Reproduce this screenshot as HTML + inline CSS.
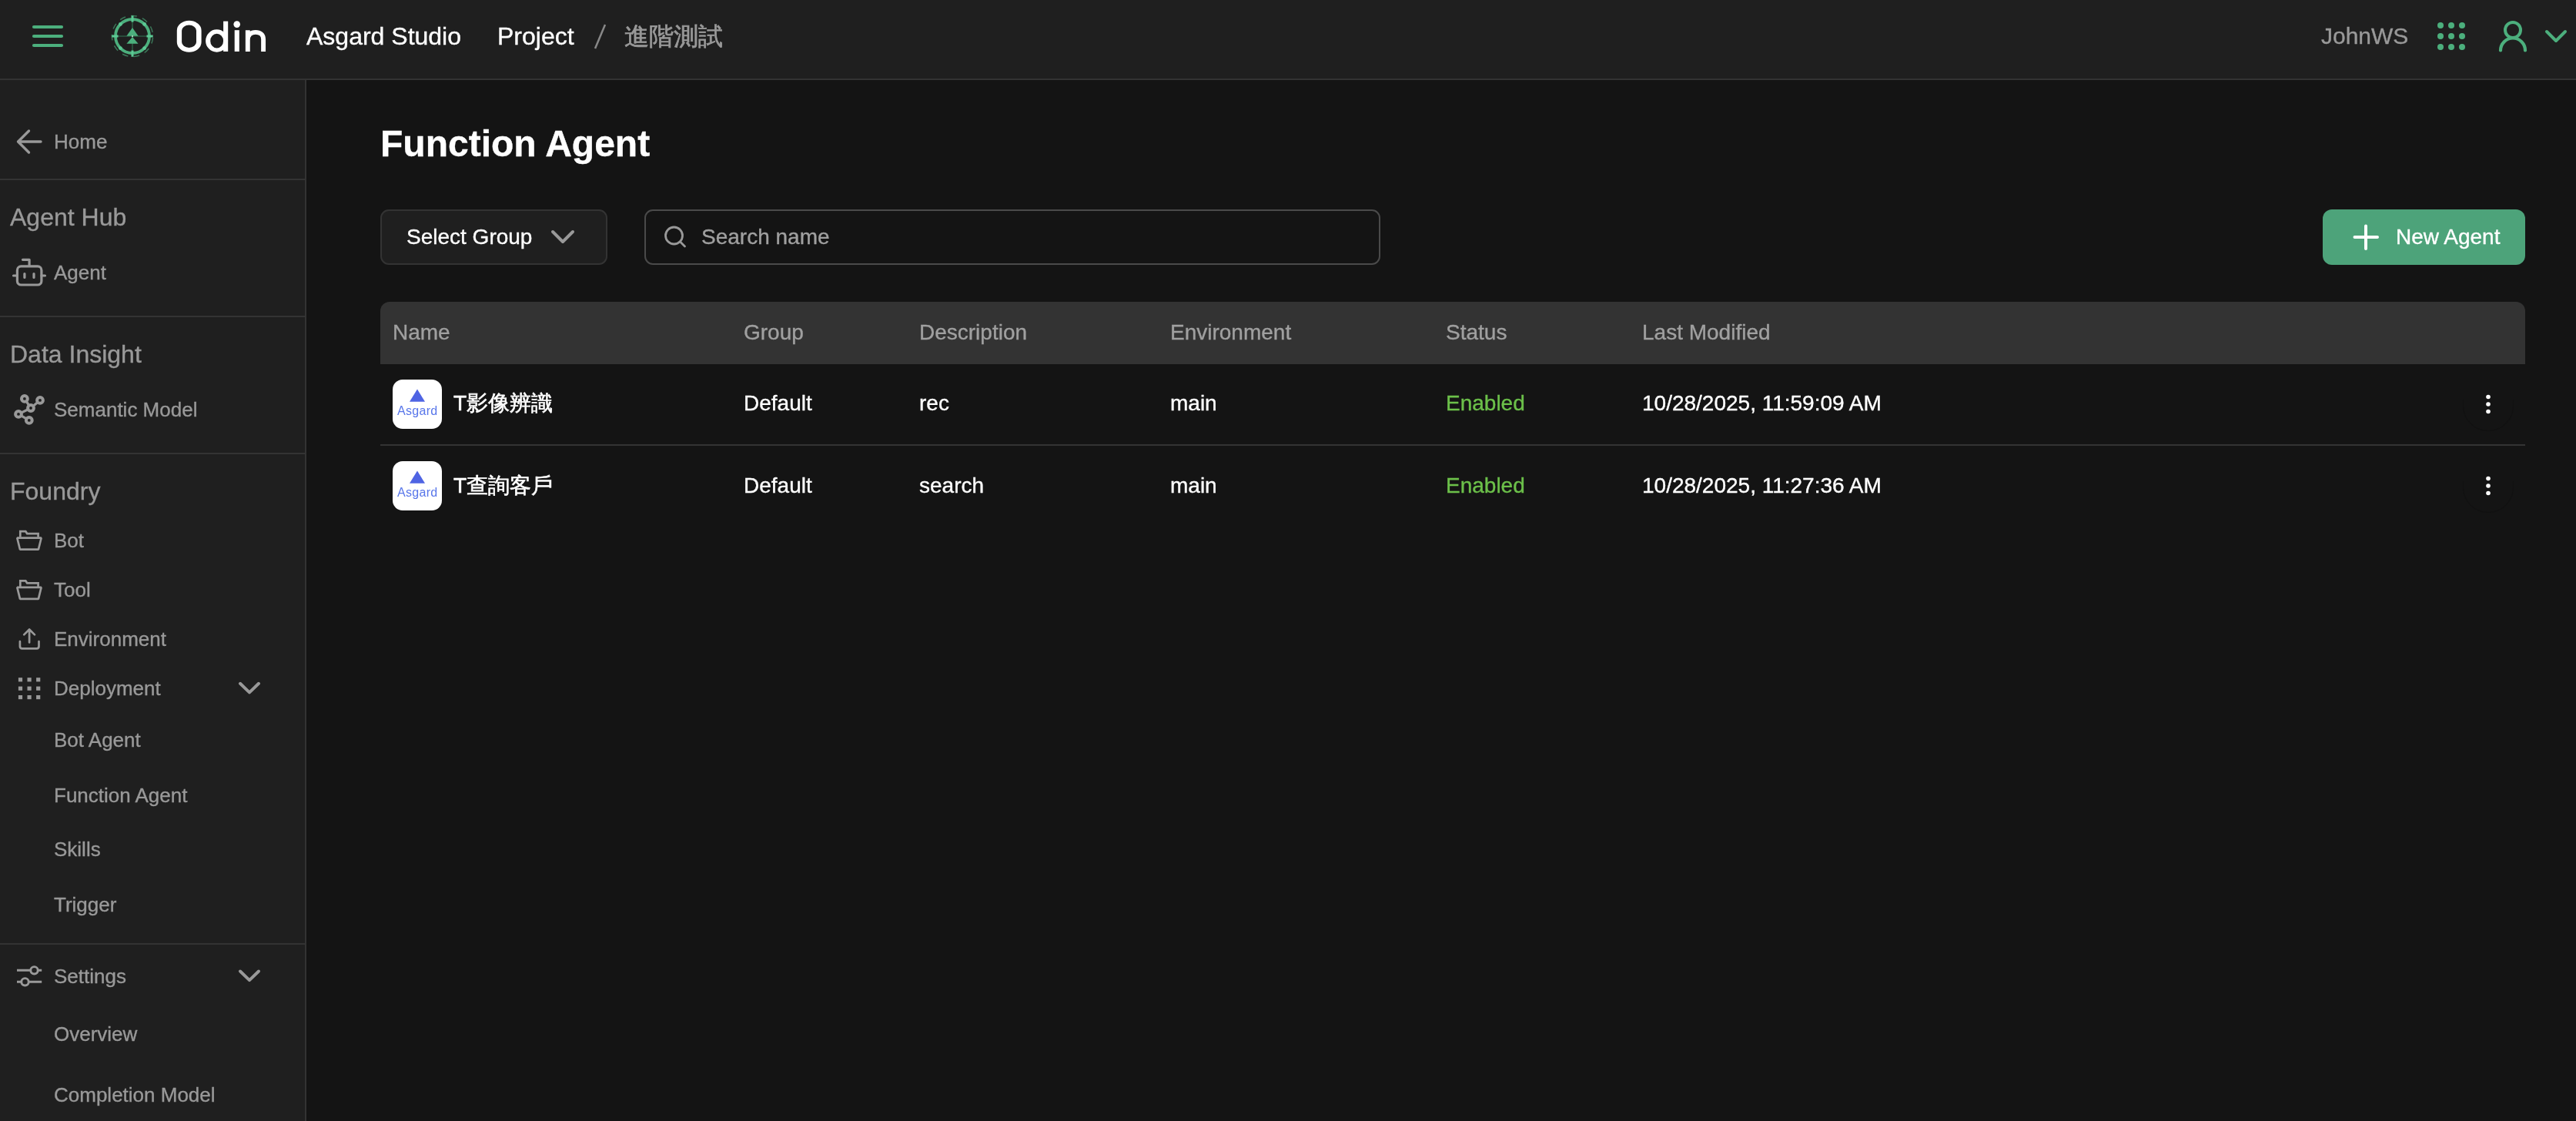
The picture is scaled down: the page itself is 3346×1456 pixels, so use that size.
<!DOCTYPE html>
<html><head><meta charset="utf-8">
<style>
*{box-sizing:border-box;margin:0;padding:0}
html,body{width:3346px;height:1456px;overflow:hidden;background:#141414;font-family:"Liberation Sans",sans-serif;}
.a{position:absolute;white-space:nowrap;line-height:40px;will-change:transform;-webkit-text-stroke:0.35px currentColor}
.bx{position:absolute}
svg{position:absolute;overflow:visible}
</style></head><body>
<div class="bx" style="left:0;top:0;width:3346px;height:102px;background:#1f1f1f"></div>
<div class="bx" style="left:0;top:102px;width:3346px;height:2px;background:#333"></div>
<div class="bx" style="left:0;top:104px;width:396px;height:1352px;background:#1f1f1f"></div>
<div class="bx" style="left:396px;top:104px;width:2px;height:1352px;background:#333"></div>
<svg style="left:0;top:0" width="100" height="100"><g stroke="#4caf7d" stroke-width="4.2" stroke-linecap="round"><line x1="44" y1="35" x2="80" y2="35"/><line x1="44" y1="47" x2="80" y2="47"/><line x1="44" y1="59" x2="80" y2="59"/></g></svg>
<svg style="left:140px;top:15px" width="64" height="64" viewBox="0 0 64 64">
 <g fill="none">
  <circle cx="32" cy="32" r="26.6" stroke="#4caf7d" stroke-width="1.5" stroke-dasharray="7.7 7.4" stroke-dashoffset="-2" opacity="0.6"/>
  <line x1="32" y1="12" x2="32" y2="52" stroke="#2d5a43" stroke-width="1.6"/>
  <line x1="12" y1="32" x2="52" y2="32" stroke="#2d5a43" stroke-width="1.6"/>
  <circle cx="32" cy="32" r="22" stroke="#4caf7d" stroke-width="3.8"/>
 </g>
 <g fill="#5cc994">
  <rect x="30.5" y="5.3" width="3" height="8.2"/><rect x="30.5" y="50.5" width="3" height="8.2"/>
  <rect x="5.3" y="30.5" width="8.2" height="3"/><rect x="50.5" y="30.5" width="8.2" height="3"/>
  <circle cx="16.4" cy="16.4" r="2.4"/><circle cx="47.6" cy="16.4" r="2.4"/><circle cx="16.4" cy="47.6" r="2.4"/><circle cx="47.6" cy="47.6" r="2.4"/>
 </g>
 <g fill="#4caf7d"><path d="M32 21 L39.6 31.8 L24.4 31.8Z"/><path d="M32 33 L39.6 41.8 L24.4 41.8Z"/></g>
 <circle cx="32" cy="32" r="1" fill="#bfe8d3"/>
</svg>
<svg style="left:0;top:0" width="360" height="80"><g fill="#fff">
 <path fill-rule="evenodd" d="M229.8 39.7 A15.9 12.9 0 0 1 261.6 39.7 V54.8 A15.9 12.9 0 0 1 229.8 54.8 Z M236.1 39.7 A9.45 7.1 0 0 1 255 39.7 V54.8 A9.45 7.1 0 0 1 236.1 54.8 Z"/>
 <path fill-rule="evenodd" d="M267.1 53 A14.5 14.65 0 1 0 296.1 53 A14.5 14.65 0 1 0 267.1 53 Z M273.2 53.15 A8.45 9.45 0 1 0 290.1 53.15 A8.45 9.45 0 1 0 273.2 53.15 Z"/>
 <rect x="290.1" y="27.6" width="6.1" height="39.3"/>
 <rect x="304.7" y="39.2" width="6.1" height="27.7"/><circle cx="307.7" cy="31.6" r="4.3"/>
 </g>
 <path stroke="#fff" stroke-width="5.9" fill="none" d="M321.8 66.9 V39.2 M321.8 52 C321.8 45 326 41.9 332 41.9 C338 41.9 342.1 45 342.1 51 V66.9"/>
</svg>
<div class="a" style="left:398px;top:27px;font-size:32px;color:#fff;">Asgard Studio</div>
<div class="a" style="left:646px;top:27px;font-size:32px;color:#fff;">Project</div>
<svg style="left:0;top:0" width="800" height="80"><line x1="773" y1="63" x2="786" y2="32" stroke="#888" stroke-width="2.5"/></svg>
<div class="a" style="left:811px;top:27px;font-size:32px;color:#999;-webkit-text-stroke:0.7px #999">進階測試</div>
<div class="a" style="left:3015px;top:27px;font-size:30px;color:#999;">JohnWS</div>
<svg style="left:3160px;top:23px" width="48" height="48"><g fill="#4caf7d"><circle cx="10" cy="10" r="4"/><circle cx="10" cy="24" r="4"/><circle cx="10" cy="38" r="4"/><circle cx="24" cy="10" r="4"/><circle cx="24" cy="24" r="4"/><circle cx="24" cy="38" r="4"/><circle cx="38" cy="10" r="4"/><circle cx="38" cy="24" r="4"/><circle cx="38" cy="38" r="4"/></g></svg>
<svg style="left:3240px;top:22px" width="100" height="50"><g fill="none" stroke="#4caf7d" stroke-width="4" stroke-linecap="round">
 <circle cx="24" cy="17" r="10"/><path d="M8 43.5 A16 16 0 0 1 40 43.5" stroke-width="4.2"/>
 <path d="M68 19 L80 31 L92 19" stroke-linejoin="round"/></g></svg>
<div class="bx" style="left:0;top:232px;width:396px;height:2px;background:#333"></div>
<div class="bx" style="left:0;top:410px;width:396px;height:2px;background:#333"></div>
<div class="bx" style="left:0;top:588px;width:396px;height:2px;background:#333"></div>
<div class="bx" style="left:0;top:1225px;width:396px;height:2px;background:#333"></div>
<svg style="left:0;top:0" width="400" height="1456"><g fill="none" stroke="#999999" stroke-linecap="round" stroke-linejoin="round">
 <path d="M37.5 170 L23.5 184 L37.5 198 M23.5 184 L53 184" stroke-width="3.4"/>
 <rect x="22.4" y="345.9" width="31.5" height="24.1" rx="5" stroke-width="3.2"/>
 <path d="M38.1 345.5 V337.3 H29.5 M17.5 358 H22 M54 358 H58.5 M31.9 355.5 V360.5 M44 355.5 V360.5" stroke-width="3.2"/>
 <path d="M31.9 517.9 L40 530 L52 519.9 M40 530 L24 537.9 L37.8 545.9" stroke-width="3.2"/>
 <circle cx="31.9" cy="517.9" r="3.9" stroke-width="4" fill="#1f1f1f"/>
 <circle cx="52" cy="519.9" r="3.9" stroke-width="4" fill="#1f1f1f"/>
 <circle cx="40" cy="530" r="3.9" stroke-width="4" fill="#1f1f1f"/>
 <circle cx="24" cy="537.9" r="3.9" stroke-width="4" fill="#1f1f1f"/>
 <circle cx="37.8" cy="545.9" r="3.9" stroke-width="4" fill="#1f1f1f"/>
 <g transform="translate(0 0)" stroke-width="2.7" stroke-linecap="butt" stroke-linejoin="miter"><path d="M26.3 697.7 V690.2 H33.3 L35.2 693.1 H49.6 V697.7"/><path d="M22.3 698.7 H53.6 L49.9 713.7 H26 Z" stroke-linejoin="bevel"/></g>
 <g transform="translate(0 64.2)" stroke-width="2.7" stroke-linecap="butt" stroke-linejoin="miter"><path d="M26.3 697.7 V690.2 H33.3 L35.2 693.1 H49.6 V697.7"/><path d="M22.3 698.7 H53.6 L49.9 713.7 H26 Z" stroke-linejoin="bevel"/></g>
 <path d="M38.1 817.5 V834.5 M31.2 824.4 L38.1 817.5 L45 824.4" stroke-width="2.7"/>
 <path d="M25.9 833.2 V839.5 Q25.9 842.3 28.7 842.3 H47.7 Q50.5 842.3 50.5 839.5 V833.2" stroke-width="2.7"/>
 <path d="M312 887.8 L324 899.4 L336 887.8" stroke-width="4"/>
 <path d="M312 1261.5 L324 1273.1 L336 1261.5" stroke-width="4"/>
 <path d="M22 1260.3 H39.8 M49.2 1260.3 H54.2 M22 1275.3 H27.8 M37.2 1275.3 H54.2" stroke-width="3" stroke-linecap="butt"/>
 <circle cx="44.5" cy="1260.3" r="4.7" stroke-width="2.9"/><circle cx="32.5" cy="1275.3" r="4.7" stroke-width="2.9"/>
</g>
 <rect x="23.9" y="880.2" width="5.2" height="5.2" fill="#999999"/>
 <rect x="23.9" y="891.6" width="5.2" height="5.2" fill="#999999"/>
 <rect x="23.9" y="903.0" width="5.2" height="5.2" fill="#999999"/>
 <rect x="35.5" y="880.2" width="5.2" height="5.2" fill="#999999"/>
 <rect x="35.5" y="891.6" width="5.2" height="5.2" fill="#999999"/>
 <rect x="35.5" y="903.0" width="5.2" height="5.2" fill="#999999"/>
 <rect x="47.099999999999994" y="880.2" width="5.2" height="5.2" fill="#999999"/>
 <rect x="47.099999999999994" y="891.6" width="5.2" height="5.2" fill="#999999"/>
 <rect x="47.099999999999994" y="903.0" width="5.2" height="5.2" fill="#999999"/>
</svg>
<div class="a" style="left:70px;top:164px;font-size:26px;color:#999999;">Home</div>
<div class="a" style="left:13px;top:262px;font-size:32px;color:#999999;">Agent Hub</div>
<div class="a" style="left:69.5px;top:334px;font-size:26px;color:#999999;">Agent</div>
<div class="a" style="left:13px;top:440px;font-size:32px;color:#999999;">Data Insight</div>
<div class="a" style="left:69.5px;top:512px;font-size:26px;color:#999999;">Semantic Model</div>
<div class="a" style="left:13px;top:618px;font-size:32px;color:#999999;">Foundry</div>
<div class="a" style="left:69.5px;top:682px;font-size:26px;color:#999999;">Bot</div>
<div class="a" style="left:69.5px;top:746px;font-size:26px;color:#999999;">Tool</div>
<div class="a" style="left:69.5px;top:810px;font-size:26px;color:#999999;">Environment</div>
<div class="a" style="left:69.5px;top:874px;font-size:26px;color:#999999;">Deployment</div>
<div class="a" style="left:69.5px;top:941px;font-size:26px;color:#999999;">Bot Agent</div>
<div class="a" style="left:69.5px;top:1013px;font-size:26px;color:#999999;">Function Agent</div>
<div class="a" style="left:69.5px;top:1083px;font-size:26px;color:#999999;">Skills</div>
<div class="a" style="left:69.5px;top:1155px;font-size:26px;color:#999999;">Trigger</div>
<div class="a" style="left:69.5px;top:1248px;font-size:26px;color:#999999;">Settings</div>
<div class="a" style="left:69.5px;top:1323px;font-size:26px;color:#999999;">Overview</div>
<div class="a" style="left:69.5px;top:1402px;font-size:26px;color:#999999;">Completion Model</div>
<div class="a" style="left:494px;top:162px;font-size:48px;line-height:50px;font-weight:bold;color:#fff">Function Agent</div>
<div class="bx" style="left:494px;top:272px;width:295px;height:72px;background:#1f1f1f;border:2px solid #333;border-radius:11px"></div>
<div class="a" style="left:528px;top:288px;font-size:28px;color:#fff;">Select Group</div>
<svg style="left:0;top:0" width="800" height="400"><path d="M718 301 L731 314 L744 301" fill="none" stroke="#999" stroke-width="4" stroke-linecap="round" stroke-linejoin="round"/></svg>
<div class="bx" style="left:837px;top:272px;width:956px;height:72px;border:2px solid #4a4a4a;border-radius:11px"></div>
<svg style="left:0;top:0" width="1000" height="400"><g fill="none" stroke="#999" stroke-width="2.8" stroke-linecap="round"><circle cx="875.5" cy="306" r="11"/><path d="M883.5 314 L889.5 320"/></g></svg>
<div class="a" style="left:911px;top:288px;font-size:28px;color:#a0a0a0;">Search name</div>
<div class="bx" style="left:3017px;top:272px;width:263px;height:72px;background:#4da37a;border-radius:12px"></div>
<svg style="left:0;top:0" width="3346" height="400"><path d="M3073 293.5 V323 M3058.5 308 H3088" fill="none" stroke="#fff" stroke-width="4" stroke-linecap="round"/></svg>
<div class="a" style="left:3112px;top:288px;font-size:28px;color:#fff;">New Agent</div>
<div class="bx" style="left:494px;top:392px;width:2786px;height:81px;background:#333;border-radius:12px 12px 0 0"></div>
<div class="a" style="left:510px;top:412px;font-size:28px;color:#a0a0a0;">Name</div>
<div class="a" style="left:966px;top:412px;font-size:28px;color:#a0a0a0;">Group</div>
<div class="a" style="left:1194px;top:412px;font-size:28px;color:#a0a0a0;">Description</div>
<div class="a" style="left:1520px;top:412px;font-size:28px;color:#a0a0a0;">Environment</div>
<div class="a" style="left:1878px;top:412px;font-size:28px;color:#a0a0a0;">Status</div>
<div class="a" style="left:2133px;top:412px;font-size:28px;color:#a0a0a0;">Last Modified</div>
<div class="bx" style="left:494px;top:577px;width:2786px;height:2px;background:#333"></div>
<div class="bx" style="left:510px;top:493px;width:64px;height:64px;background:#fff;border-radius:13px"></div>
<svg style="left:510px;top:493px" width="64" height="64"><path d="M32 12.5 L42 28.8 L22 28.8Z" fill="#4f64e3"/></svg>
<div class="a" style="left:516px;top:524px;font-size:16px;line-height:20px;color:#5876ea;letter-spacing:0.3px;-webkit-text-stroke:0">Asgard</div>
<div class="a" style="left:589px;top:504px;font-size:28px;color:#fff;-webkit-text-stroke:0.6px #fff">T影像辨識</div>
<div class="a" style="left:966px;top:504px;font-size:28px;color:#fff;">Default</div>
<div class="a" style="left:1194px;top:504px;font-size:28px;color:#fff;">rec</div>
<div class="a" style="left:1520px;top:504px;font-size:28px;color:#fff;">main</div>
<div class="a" style="left:1878px;top:504px;font-size:28px;color:#6cc04a;">Enabled</div>
<div class="a" style="left:2133px;top:504px;font-size:28px;color:#fff;">10/28/2025, 11:59:09 AM</div>
<svg style="left:0;top:0" width="3346" height="800"><path d="M3199.5 519 V527 A32.5 32.5 0 0 0 3264.5 527 V519" fill="none" stroke="rgba(0,0,0,0.13)" stroke-width="1.5"/><g fill="#fff"><circle cx="3232" cy="515.5" r="2.8"/><circle cx="3232" cy="525" r="2.8"/><circle cx="3232" cy="534.5" r="2.8"/></g></svg>
<div class="bx" style="left:510px;top:599px;width:64px;height:64px;background:#fff;border-radius:13px"></div>
<svg style="left:510px;top:599px" width="64" height="64"><path d="M32 12.5 L42 28.8 L22 28.8Z" fill="#4f64e3"/></svg>
<div class="a" style="left:516px;top:630px;font-size:16px;line-height:20px;color:#5876ea;letter-spacing:0.3px;-webkit-text-stroke:0">Asgard</div>
<div class="a" style="left:589px;top:610.5px;font-size:28px;color:#fff;-webkit-text-stroke:0.6px #fff">T查詢客戶</div>
<div class="a" style="left:966px;top:610.5px;font-size:28px;color:#fff;">Default</div>
<div class="a" style="left:1194px;top:610.5px;font-size:28px;color:#fff;">search</div>
<div class="a" style="left:1520px;top:610.5px;font-size:28px;color:#fff;">main</div>
<div class="a" style="left:1878px;top:610.5px;font-size:28px;color:#6cc04a;">Enabled</div>
<div class="a" style="left:2133px;top:610.5px;font-size:28px;color:#fff;">10/28/2025, 11:27:36 AM</div>
<svg style="left:0;top:0" width="3346" height="800"><path d="M3199.5 625 V633 A32.5 32.5 0 0 0 3264.5 633 V625" fill="none" stroke="rgba(0,0,0,0.13)" stroke-width="1.5"/><g fill="#fff"><circle cx="3232" cy="621.5" r="2.8"/><circle cx="3232" cy="631" r="2.8"/><circle cx="3232" cy="640.5" r="2.8"/></g></svg>
</body></html>
